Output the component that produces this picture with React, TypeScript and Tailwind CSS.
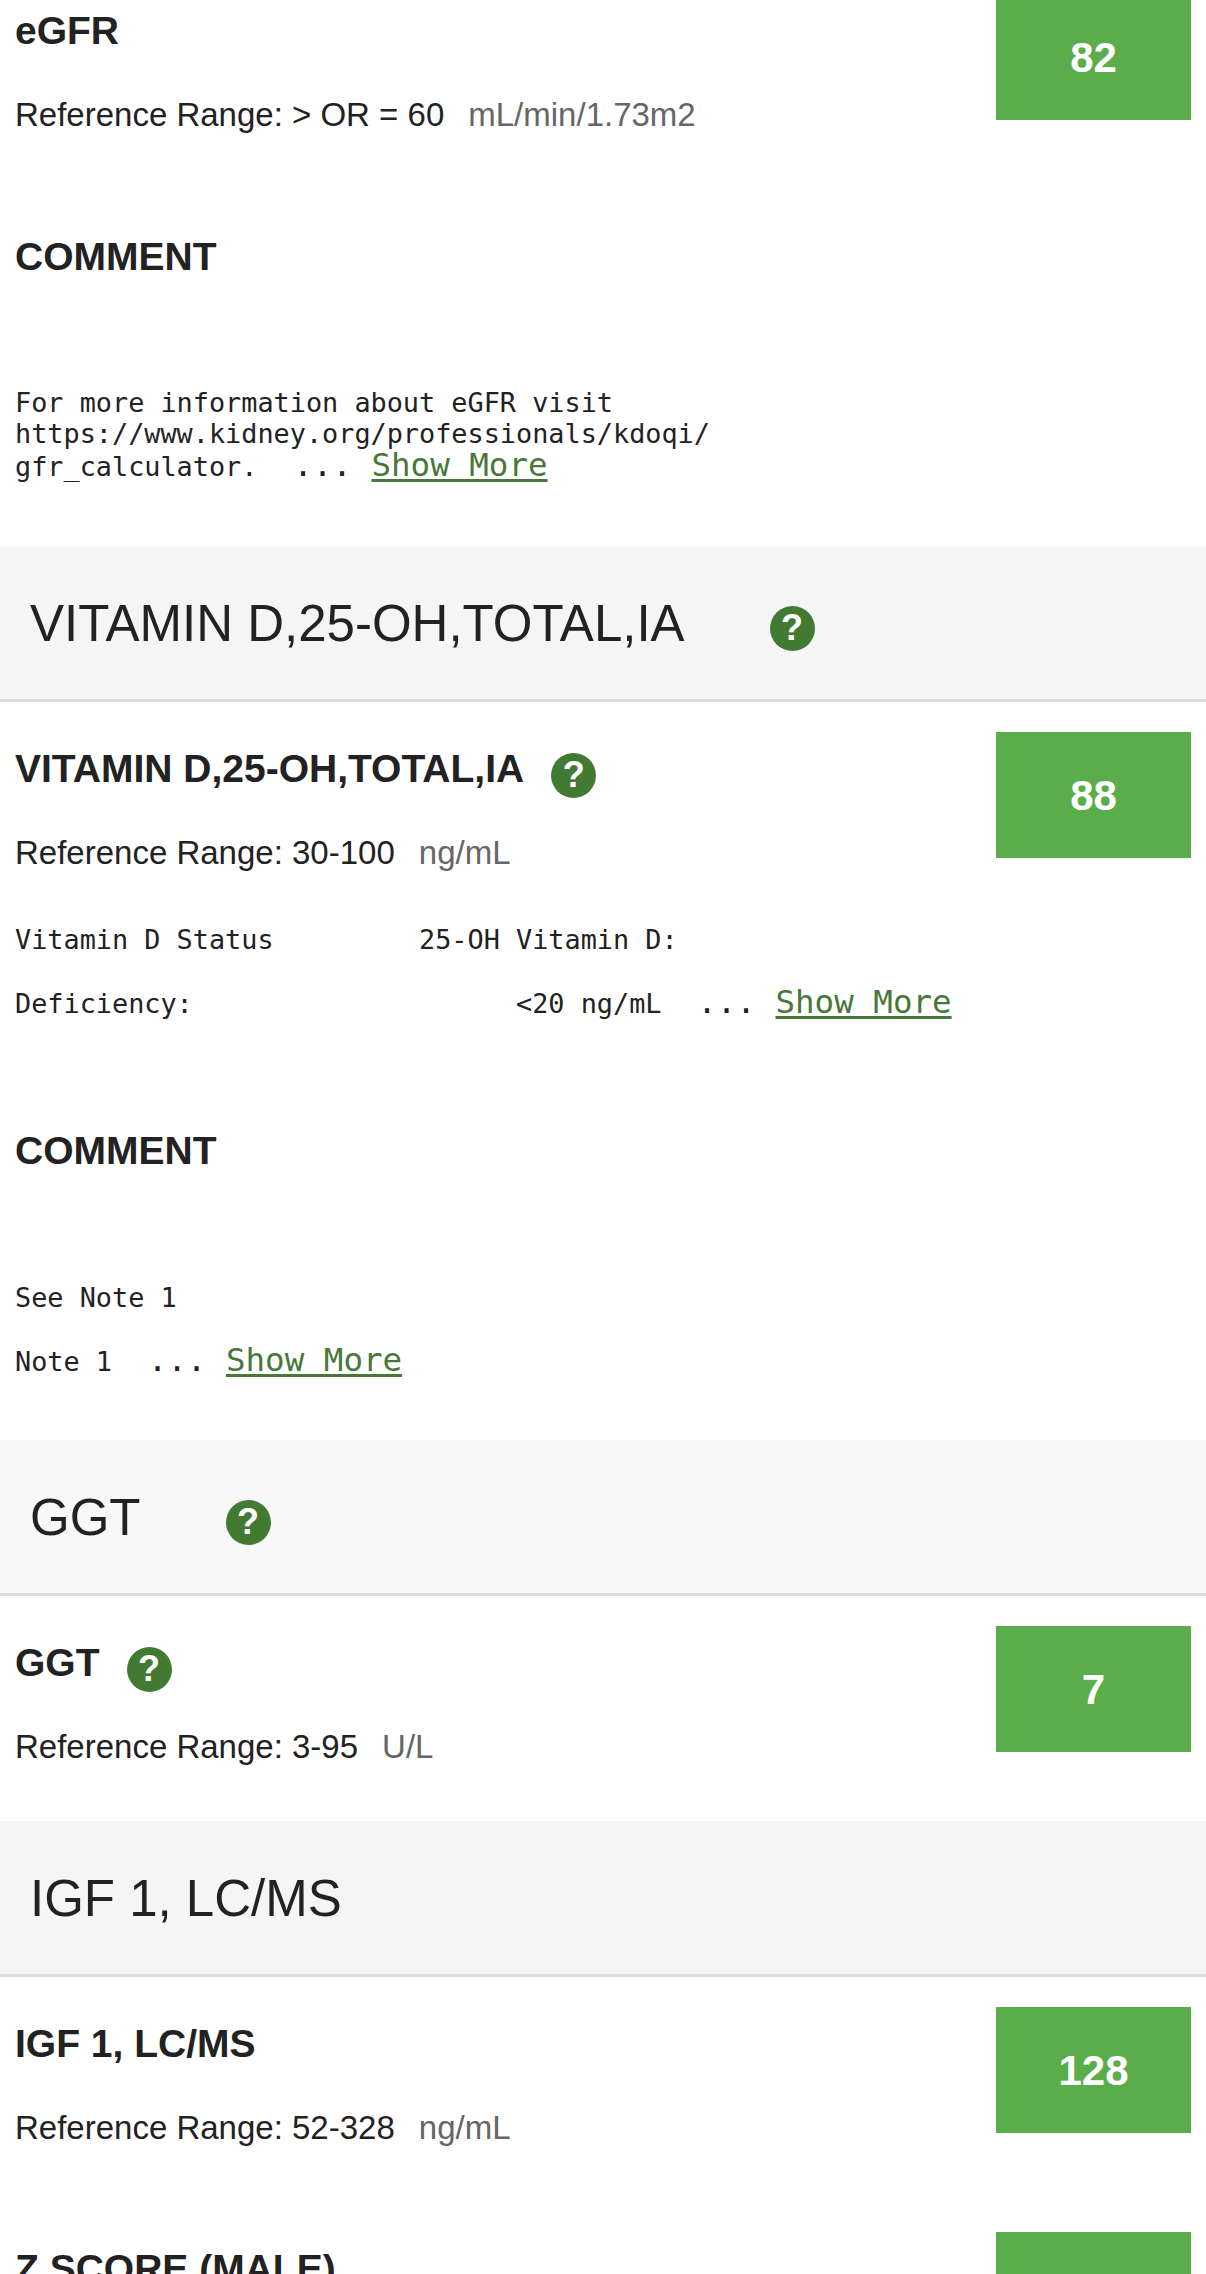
import React from 'react'

function Help({ className = '' }: { className?: string }) {
  return (
    <span className={`flex h-[45px] w-[45px] shrink-0 items-center justify-center rounded-full bg-[#437a33] text-[36px] font-bold leading-none text-white ${className}`}>
      ?
    </span>
  )
}

function ShowMore() {
  return (
    <span className="text-[32.5px] leading-none">
      {' ... '}
      <a className="text-[#47783a] underline decoration-[3px] underline-offset-[3px]">Show More</a>
    </span>
  )
}

function Notes({ lines }: { lines: React.ReactNode[] }) {
  return (
    <div className="font-['DejaVu_Sans_Mono',monospace] text-[26.85px] leading-[31px] text-[#222] whitespace-pre">
      {lines.map((l, i) => (
        <div key={i} className="h-[31px]">{l}</div>
      ))}
    </div>
  )
}

function Section({ title, help, bg = 'bg-[#f5f5f5]' }: { title: string; help?: boolean; bg?: string }) {
  return (
    <div className={`flex h-[156px] items-center gap-[85px] border-b-[3px] border-[#dcdcdc] pl-[30px] ${bg}`}>
      <h2 className="mt-[2px] text-[51px] leading-none text-[#222]">{title}</h2>
      {help && <Help className="mt-[11px]" />}
    </div>
  )
}

function Result(props: {
  title: string
  help?: boolean
  range?: string
  unit?: string
  value?: string
  hasBox?: boolean
  notes?: React.ReactNode[]
  notesClass?: string
  className?: string
}) {
  const { title, help, range, unit, value, hasBox, notes, notesClass, className = '' } = props
  return (
    <div className={`flex justify-between pl-[15px] pr-[15px] pt-[30px] ${className}`}>
      <div className="min-w-0 flex-1">
        <div className="flex h-[72px] items-center gap-[27px]">
          <h3 className="mt-[1px] text-[39px] font-bold leading-none text-[#222]">{title}</h3>
          {help && <Help className="mt-[14px]" />}
        </div>
        {range && (
          <div className="mt-[19px] flex h-[60px] items-center gap-[24px] text-[33px]">
            <span className="text-[#222]">Reference Range: {range}</span>
            <span className="text-[#666]">{unit}</span>
          </div>
        )}
        {notes && <div className={notesClass}><Notes lines={notes} /></div>}
      </div>
      {(value || hasBox) && (
        <div className="flex h-[126px] w-[195px] shrink-0 items-center justify-center bg-[#5aad4a] text-[42px] font-bold text-white">
          {value}
        </div>
      )}
    </div>
  )
}

export default function App() {
  return (
    <div className="h-[2274px] overflow-hidden bg-white font-['Liberation_Sans',Arial,sans-serif]">
      <div className="-mt-[36px]">
        <Result className="pb-[45px]" title="eGFR" range="> OR = 60" unit="mL/min/1.73m2" value="82" />
        <Result
          className="pb-[66px]"
          title="COMMENT"
          notesClass="mt-[95px]"
          notes={[
            'For more information about eGFR visit',
            'https://www.kidney.org/professionals/kdoqi/',
            <>gfr_calculator. <ShowMore /></>,
          ]}
        />
        <Section title="VITAMIN D,25-OH,TOTAL,IA" help />
        <Result
          className="pb-[67px]"
          title="VITAMIN D,25-OH,TOTAL,IA"
          help
          range="30-100"
          unit="ng/mL"
          value="88"
          notesClass="mt-[41px]"
          notes={[
            'Vitamin D Status         25-OH Vitamin D:',
            '',
            <>Deficiency:                    {'<20 ng/mL '}<ShowMore /></>,
          ]}
        />
        <Result
          className="pb-[65px]"
          title="COMMENT"
          notesClass="mt-[96px]"
          notes={['See Note 1', '', <>Note 1 <ShowMore /></>]}
        />
        <Section title="GGT" help bg="bg-[#f8f8f8]" />
        <Result className="pb-[44px]" title="GGT" help range="3-95" unit="U/L" value="7" />
        <Section title="IGF 1, LC/MS" />
        <Result className="pb-[44px]" title="IGF 1, LC/MS" range="52-328" unit="ng/mL" value="128" />
        <Result title="Z SCORE (MALE)" hasBox />
      </div>
    </div>
  )
}
